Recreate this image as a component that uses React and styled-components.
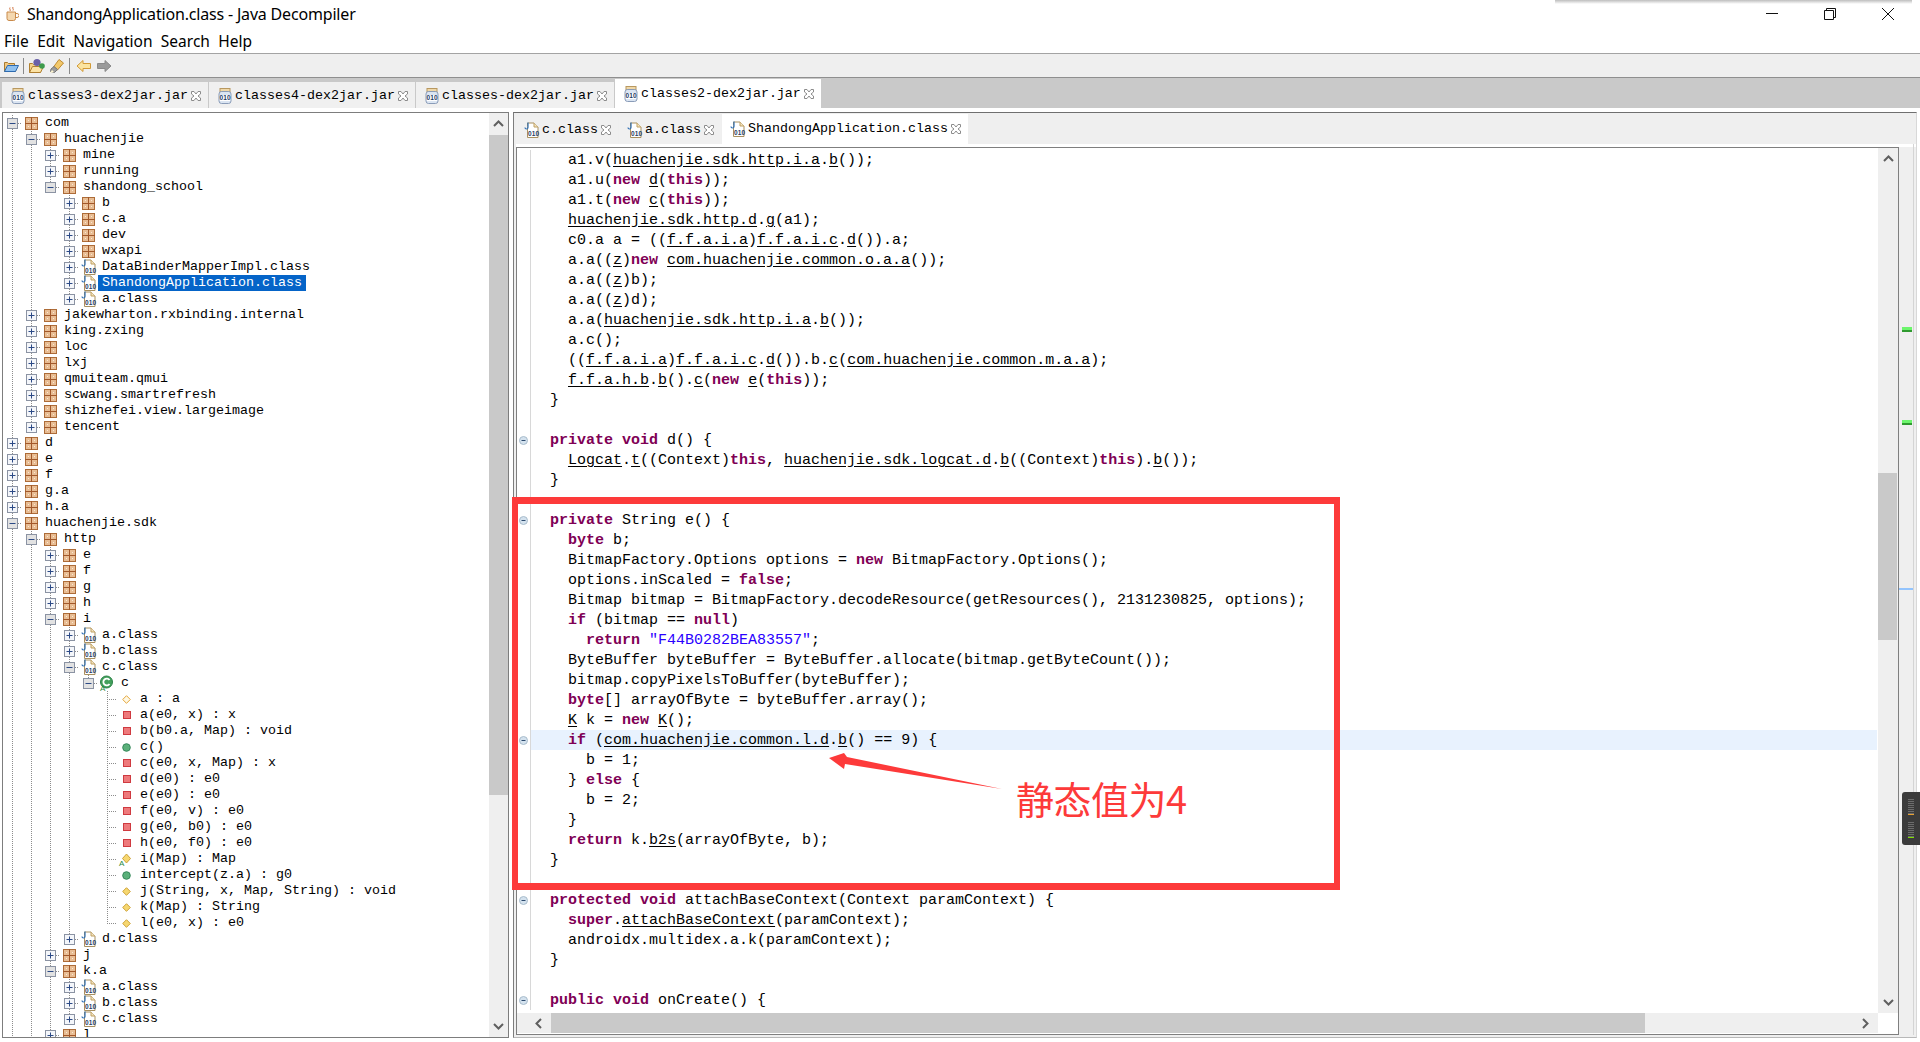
import React from 'react';
import styled, { createGlobalStyle } from 'styled-components';

const GlobalStyle = createGlobalStyle`
  html, body { margin: 0; padding: 0; background: #fff; }
  #root { width: 1920px; height: 1042px; overflow: hidden; }
`;

const MONO = `"Liberation Mono", monospace`;
const UI = `"Noto Sans", sans-serif`;

const Page = styled.div`
  position: relative;
  width: 1920px;
  height: 1042px;
  display: flex;
  flex-direction: column;
  background: #fff;
  overflow: hidden;
`;
const TopShadow = styled.div`
  position: absolute;
  top: 0;
  left: 1555px;
  width: 357px;
  height: 4px;
  background: linear-gradient(#bdbdbd, rgba(255, 255, 255, 0));
`;
const TitleBar = styled.div`
  height: 30px;
  flex: none;
  display: flex;
  align-items: center;
  padding: 0 26px 2px 5px;
  box-sizing: border-box;
  font: 16px ${UI};
  color: #000;
`;
const TitleText = styled.span`
  margin-left: 8px;
  letter-spacing: -0.18px;
`;
const WindowButtons = styled.div`
  margin-left: auto;
  display: flex;
  gap: 46px;
`;
const MenuBar = styled.div`
  height: 24px;
  flex: none;
  box-sizing: border-box;
  display: flex;
  align-items: center;
  gap: 8.4px;
  padding: 0 0 2px 4px;
  font: 15.5px ${UI};
  color: #000;
  border-bottom: 1px solid #a3a3a3;
`;
const ToolBar = styled.div`
  height: 24px;
  flex: none;
  box-sizing: border-box;
  display: flex;
  align-items: center;
  padding-left: 3px;
  gap: 4px;
  background: #efefef;
  border-bottom: 1px solid #8f8f8f;
`;
const ToolSep = styled.div`
  width: 1px;
  height: 16px;
  background: #8a8a8a;
  margin-right: ${p => p.$after}px;
`;
const JarTabs = styled.div`
  height: 30px;
  flex: none;
  display: flex;
  align-items: flex-end;
  gap: 1px;
  padding-left: 2px;
  background: #c9c9c9;
`;
const TabItem = styled.div`
  position: relative;
  box-sizing: border-box;
  height: ${p => p.$height}px;
  display: flex;
  align-items: center;
  padding: ${p => p.$padTop}px 6px ${p => p.$padBottom}px 8px;
  font: 13.33px/16px ${MONO};
  color: #000;
  background: ${p => (p.$active ? '#fff' : '#f0f0f0')};
  margin-bottom: ${p => p.$lift}px;
  svg:first-child { margin-right: 2px; }
  svg:last-child { margin-left: 3px; margin-right: 1px; }
`;
const Body = styled.div`
  margin-top: 4px;
  height: 926px;
  flex: none;
  display: flex;
  gap: 4px;
  padding-left: 2px;
`;
const TreePanel = styled.div`
  width: 507px;
  box-sizing: border-box;
  display: flex;
  border: 1px solid #7d7d7d;
`;
const TreeList = styled.div`
  flex: 1;
  padding-top: 2px;
  overflow: hidden;
  min-width: 0;
`;
const TreeRow = styled.div`
  height: 16px;
  display: flex;
  white-space: pre;
`;
const Guide = styled.div`
  width: 19px;
  flex: none;
  background: ${p =>
    p.$on
      ? 'repeating-linear-gradient(to bottom, #8c8c8c 0 1px, transparent 1px 2px) 9px 0 / 1px 100% no-repeat'
      : 'none'};
`;
const Connector = styled.div`
  width: 19px;
  flex: none;
  display: flex;
  align-items: center;
  padding-left: 4px;
  box-sizing: border-box;
  background:
    repeating-linear-gradient(to right, #8c8c8c 0 1px, transparent 1px 2px) 9px 8px / 10px 1px no-repeat,
    repeating-linear-gradient(to bottom, #8c8c8c 0 1px, transparent 1px 2px) 9px 0 / 1px ${p => (p.$last ? '8px' : '100%')} no-repeat;
`;
const IconCell = styled.div`
  width: 19px;
  flex: none;
  display: flex;
  align-items: center;
  justify-content: center;
`;
const TreeLabel = styled.span`
  padding: 0 4px;
  font: 13.33px/16px ${MONO};
  color: ${p => (p.$selected ? '#fff' : '#000')};
  background: ${p => (p.$selected ? '#0564c8' : 'transparent')};
`;
const ScrollV = styled.div`
  width: ${p => p.$width}px;
  flex: none;
  display: flex;
  flex-direction: column;
  background: #efefef;
`;
const ArrowCap = styled.div`
  height: ${p => p.$size}px;
  flex: none;
  display: flex;
  align-items: center;
  justify-content: center;
  margin-top: ${p => (p.$end ? 'auto' : '0')};
`;
const ThumbV = styled.div`
  width: 19px;
  height: ${p => p.$height}px;
  flex: none;
  margin-top: ${p => p.$top}px;
  background: #c9c9c9;
`;
const RightPanel = styled.div`
  width: 1404px;
  box-sizing: border-box;
  display: flex;
  flex-direction: column;
  border-top: 1px solid #6f6f6f;
  border-left: 1px solid #7d7d7d;
  border-right: 1px solid #d8d8d8;
  border-bottom: 1px solid #b8b8b8;
  background: #efefef;
  padding-left: 2px;
`;
const EditorTabs = styled.div`
  height: 34px;
  flex: none;
  display: flex;
  align-items: flex-end;
  gap: 1px;
  box-shadow: inset 0 -3px 0 #fff;
`;
const EditorRow = styled.div`
  height: 888px;
  flex: none;
  display: flex;
`;
const Editor = styled.div`
  position: relative;
  width: 1383px;
  box-sizing: border-box;
  display: grid;
  grid-template-columns: 1fr 20px;
  grid-template-rows: 865px 20px;
  border: 1px solid #7f7f7f;
  background: #fff;
`;
const CodeArea = styled.div`
  overflow: hidden;
  padding-top: 2px;
`;
const CodeLine = styled.div`
  height: 20px;
  display: flex;
  margin-right: 1px;
`;
const FoldCell = styled.div`
  width: 14px;
  flex: none;
  box-sizing: border-box;
  display: flex;
  align-items: center;
  justify-content: center;
  padding-right: 1px;
  background: #fff;
  border-right: 1px solid #d8d8d8;
`;
const CodeText = styled.div`
  flex: 1;
  height: 20px;
  padding-left: 19px;
  white-space: pre;
  font: 15px/22px ${MONO};
  color: #000;
  background: ${p => (p.$current ? '#e8f2fe' : 'transparent')};
`;
const Keyword = styled.span`
  color: #7f0055;
  font-weight: bold;
`;
const StringLit = styled.span`
  color: #2a00ff;
`;
const Ref = styled.span`
  text-decoration: underline;
  text-underline-offset: 2px;
`;
const ScrollH = styled.div`
  display: flex;
  align-items: center;
  background: #efefef;
`;
const ArrowCapH = styled.div`
  width: ${p => p.$size}px;
  height: 20px;
  flex: none;
  box-sizing: border-box;
  padding-right: ${p => p.$inset}px;
  display: flex;
  align-items: center;
  justify-content: flex-end;
`;
const ThumbH = styled.div`
  width: 1094px;
  height: 20px;
  flex: none;
  background: #c9c9c9;
`;
const Corner = styled.div`
  background: #fff;
`;
const RedBox = styled.div`
  position: absolute;
  left: -5px;
  top: 349px;
  width: 828px;
  height: 393px;
  box-sizing: border-box;
  border: 6px solid #fd3a3a;
  border-top-width: 7px;
  border-bottom-width: 7px;
  pointer-events: none;
`;
const ArrowMark = styled.svg`
  position: absolute;
  left: 312px;
  top: 605px;
`;
const Note = styled.div`
  position: absolute;
  left: 499px;
  top: 626px;
  font: 38px/48px "Noto Sans CJK SC", sans-serif;
  letter-spacing: -0.5px;
  color: #fd3a3a;
  white-space: nowrap;
`;
const Ruler = styled.div`
  position: relative;
  width: 14px;
  flex: none;
  margin-top: -3px;
  border-right: 1px solid #d4d4d4;
`;
const RulerMark = styled.div`
  position: absolute;
  left: 3px;
  width: 10px;
  height: 5px;
  top: ${p => p.$top}px;
  background: linear-gradient(#6cf56c 60%, #2f9a2f 60%);
`;
const RulerLine = styled.div`
  position: absolute;
  left: 0;
  width: 14px;
  height: 2px;
  top: ${p => p.$top}px;
  background: #93c4fd;
`;
const FloatWidget = styled.div`
  position: absolute;
  left: 1902px;
  top: 792px;
  width: 18px;
  height: 53px;
  box-sizing: border-box;
  padding: 7px 6px 0;
  display: flex;
  flex-direction: column;
  background: #3b3b3b;
  border-radius: 3px 0 0 3px;
`;
const MeterLines = styled.div`
  height: 15px;
  background: repeating-linear-gradient(#6c6c6c 0 1px, transparent 1px 2px);
`;
const MeterTick = styled.div`
  height: 1px;
  margin-bottom: 7px;
  background: ${p => p.$color};
`;

const CupIcon = () => (
  <svg width="14" height="16" viewBox="0 0 14 16">
    <path d="M2 6h8.5v6.5a2 2 0 0 1-2 2H4a2 2 0 0 1-2-2z" fill="#f4d8b0" stroke="#c98a4a" />
    <path d="M10.5 7.5h1.5a1.5 1.5 0 0 1 0 4h-1.5" fill="none" stroke="#c98a4a" />
    <path d="M5 1.5c-1 1.5 1 2 0 3.5M8 1c-1 1.5 1 2 0 3.5" fill="none" stroke="#d0703a" />
  </svg>
);
const MinIcon = () => (
  <svg width="12" height="12" viewBox="0 0 12 12"><path d="M0 5.5h12" stroke="#111" /></svg>
);
const RestoreIcon = () => (
  <svg width="12" height="12" viewBox="0 0 12 12">
    <path d="M.5 2.5h9v9h-9z M2.5 2.5v-2h9v9h-2" fill="none" stroke="#111" />
  </svg>
);
const CloseIcon = () => (
  <svg width="12" height="12" viewBox="0 0 12 12"><path d="M0 0l12 12M12 0L0 12" stroke="#111" /></svg>
);
const OpenFolderIcon = () => (
  <svg width="16" height="16" viewBox="0 0 16 16">
    <path d="M1.5 4.5v9h11l1-6h-2v-2h-6l-1-1z" fill="#f2c880" stroke="#a87a30" />
    <path d="M1.5 13.5l3-6h11l-3 6z" fill="#8fc0ee" stroke="#2c6ab0" />
  </svg>
);
const ClassFolderIcon = () => (
  <svg width="16" height="16" viewBox="0 0 16 16">
    <path d="M.5 5.5v9h11l1-6h-2v-2h-6l-1-1z" fill="#f5d28a" stroke="#b08030" />
    <path d="M.5 14.5l3-6h11l-3 6z" fill="#fbe2a4" stroke="#b08030" />
    <circle cx="8" cy="4.5" r="3.6" fill="#6a60a8" />
    <circle cx="13" cy="8" r="2.8" fill="#3d9a4c" />
  </svg>
);
const TorchIcon = () => (
  <svg width="16" height="16" viewBox="0 0 16 16">
    <path d="M10 1.500l4.500 3.500-6 7-4-3z" fill="#f2c86a" stroke="#c08a30" />
    <path d="M5 8.500l3.500 3-3 3-4-1 .5-2.500z" fill="#9c9c9c" stroke="#777" />
    <path d="M1 15l2-3 2 2z" fill="#fff6d0" />
  </svg>
);
const BackIcon = () => (
  <svg width="16" height="16" viewBox="0 0 16 16">
    <path d="M1 8l6-5.500V5.500h7.500v5H7v3z" fill="#fbe4a0" stroke="#d29a36" />
  </svg>
);
const ForwardIcon = () => (
  <svg width="16" height="16" viewBox="0 0 16 16">
    <path d="M15 8L9 2.500V5.500H1.500v5H9v3z" fill="#9a9a9a" stroke="#8a8a8a" />
  </svg>
);
const BitsText = ({ x, y }) => (
  <text x={x} y={y} fontSize="6.5" fontWeight="bold" fontFamily="Liberation Sans" fill="#1d3c66" textLength="11">010</text>
);
const JarIcon = () => (
  <svg width="16" height="16" viewBox="0 0 16 16">
    <rect x="3" y="0.5" width="10" height="3" fill="#f0d8a8" stroke="#b89860" />
    <rect x="2" y="3.5" width="12" height="12" rx="2.5" fill="#dbe5f2" stroke="#8a9cb8" />
    <rect x="2.8" y="7" width="10.4" height="6" fill="#fff" />
    <BitsText x="2.5" y="12.4" />
  </svg>
);
const FileIcon = () => (
  <svg width="16" height="16" viewBox="0 0 16 16">
    <path d="M3.500 4.500V1h6.500l4 4v10.500H3.500z" fill="#fff" stroke="#a89060" />
    <path d="M10 1v4h4" fill="#f4e4c0" stroke="#c0a060" />
    <path d="M4 .5v5a1.500 1.500 0 0 1-3 0" fill="none" stroke="#2f6fb4" strokeWidth="1.2" />
    <BitsText x="4" y="14" />
  </svg>
);
const PackageIcon = () => (
  <svg width="13" height="13" viewBox="0 0 13 13">
    <rect x="0.5" y="0.5" width="12" height="12" fill="#e8bd94" stroke="#ad6c38" />
    <path d="M6.500 0v13M0 6.500h13" stroke="#a2582a" />
    <path d="M3 3h1v1H3zM9 3h1v1H9zM3 9h1v1H3zM9 9h1v1H9z" fill="#fbe8d4" />
  </svg>
);
const Expander = ({ open }) => (
  <svg width="11" height="11" viewBox="0 0 11 11">
    <rect x="0.5" y="0.5" width="10" height="10" fill={open ? '#e2e2e2' : '#f4f6fa'} stroke="#8b93a3" />
    <path d={open ? 'M2.500 5.500h6' : 'M2.500 5.500h6M5.500 2.500v6'} stroke="#2c4a86" />
  </svg>
);
const ClassIcon = () => (
  <svg width="19" height="16" viewBox="0 0 19 16">
    <circle cx="8.500" cy="7" r="6" fill="#43a05c" stroke="#2a8046" />
    <path d="M11.500 5a3.400 3.400 0 1 0 0 4" fill="none" stroke="#fff" strokeWidth="1.8" />
    <text x="2" y="15.500" fontSize="8" fontFamily="Liberation Sans" fill="#1f8a3e">A</text>
  </svg>
);
const MemberIcon = ({ kind }) => {
  if (kind === 'private') {
    return (
      <svg width="8" height="8" viewBox="0 0 8 8">
        <rect x="0.5" y="0.5" width="7" height="7" fill="#ee7a7c" stroke="#cf3a40" />
      </svg>
    );
  }
  if (kind === 'public') {
    return (
      <svg width="9" height="9" viewBox="0 0 9 9">
        <circle cx="4.500" cy="4.500" r="3.800" fill="#5bb07a" stroke="#35875a" />
      </svg>
    );
  }
  if (kind === 'abstract') {
    return (
      <svg width="17" height="14" viewBox="0 0 17 14">
        <path d="M8.500 2l4 4.500-4 4.500-4-4.500z" fill="#f6d770" stroke="#cda238" />
        <text x="1" y="13.500" fontSize="8" fontFamily="Liberation Sans" fill="#1f8a3e">A</text>
      </svg>
    );
  }
  return (
    <svg width="9" height="9" viewBox="0 0 9 9">
      <path d="M4.500.7l3.800 3.800-3.800 3.800L.7 4.500z" fill={kind === 'field' ? '#fff8e4' : '#f6d770'} stroke={kind === 'field' ? '#e3a63c' : '#cda238'} />
    </svg>
  );
};
const TabClose = () => (
  <svg width="10" height="10" viewBox="0 0 10 10">
    <path d="M.5.5h2.500L5 3l2-2.500h2.500V3L7 5l2.500 2v2.500H7L5 7 3 9.500H.5V7L3 5 .5 3z" fill="#fff" stroke="#8c8c8c" />
  </svg>
);
const Chevron = ({ dir }) => {
  const d = { up: 'M2 8l4.500-4.500L11 8', down: 'M2 4l4.500 4.500L11 4', left: 'M8 2L3.500 6.500 8 11', right: 'M4 2l4.500 4.500L4 11' }[dir];
  return (
    <svg width="13" height="13" viewBox="0 0 13 13">
      <path d={d} fill="none" stroke="#5f5f5f" strokeWidth="2" />
    </svg>
  );
};

const pkg = (name, kids) => ({ name, icon: 'pkg', kids });
const cls = (name, extra) => ({ name, icon: 'file', ...extra });
const member = (name, kind) => ({ name, icon: kind, leaf: true });

const TREE = [
  pkg('com', [
    pkg('huachenjie', [
      pkg('mine'),
      pkg('running'),
      pkg('shandong_school', [
        pkg('b'),
        pkg('c.a'),
        pkg('dev'),
        pkg('wxapi'),
        cls('DataBinderMapperImpl.class'),
        cls('ShandongApplication.class', { selected: true }),
        cls('a.class'),
      ]),
    ]),
    pkg('jakewharton.rxbinding.internal'),
    pkg('king.zxing'),
    pkg('loc'),
    pkg('lxj'),
    pkg('qmuiteam.qmui'),
    pkg('scwang.smartrefresh'),
    pkg('shizhefei.view.largeimage'),
    pkg('tencent'),
  ]),
  pkg('d'),
  pkg('e'),
  pkg('f'),
  pkg('g.a'),
  pkg('h.a'),
  {
    ...pkg('huachenjie.sdk', [
      {
        ...pkg('http', [
          pkg('e'),
          pkg('f'),
          pkg('g'),
          pkg('h'),
          pkg('i', [
            cls('a.class'),
            cls('b.class'),
            cls('c.class', {
              kids: [
                {
                  name: 'c',
                  icon: 'class',
                  kids: [
                    member('a : a', 'field'),
                    member('a(e0, x) : x', 'private'),
                    member('b(b0.a, Map) : void', 'private'),
                    member('c()', 'public'),
                    member('c(e0, x, Map) : x', 'private'),
                    member('d(e0) : e0', 'private'),
                    member('e(e0) : e0', 'private'),
                    member('f(e0, v) : e0', 'private'),
                    member('g(e0, b0) : e0', 'private'),
                    member('h(e0, f0) : e0', 'private'),
                    member('i(Map) : Map', 'abstract'),
                    member('intercept(z.a) : g0', 'public'),
                    member('j(String, x, Map, String) : void', 'package'),
                    member('k(Map) : String', 'package'),
                    member('l(e0, x) : e0', 'package'),
                  ],
                },
              ],
            }),
            cls('d.class'),
          ]),
          pkg('j'),
          pkg('k.a', [cls('a.class'), cls('b.class'), cls('c.class')]),
          pkg('l'),
        ]),
        more: true,
      },
    ]),
    more: true,
  },
];

const flatten = (nodes, guides = []) =>
  nodes.flatMap((node, i) => {
    const last = i === nodes.length - 1 && !node.more;
    const row = { ...node, guides, last };
    return [row, ...(node.kids ? flatten(node.kids, [...guides, !last]) : [])];
  });

const ROWS = flatten(TREE);

const RowIcon = ({ icon }) => {
  if (icon === 'pkg') return <PackageIcon />;
  if (icon === 'file') return <FileIcon />;
  if (icon === 'class') return <ClassIcon />;
  return <MemberIcon kind={icon} />;
};

const CODE = [
  '  a1.v(_huachenjie.sdk.http.i.a_._b_());',
  '  a1.u(*new* _d_(*this*));',
  '  a1.t(*new* _c_(*this*));',
  '  _huachenjie.sdk.http.d_._g_(a1);',
  '  c0.a a = ((_f.f.a.i.a_)_f.f.a.i.c_._d_()).a;',
  '  a.a((_z_)*new* _com.huachenjie.common.o.a.a_());',
  '  a.a((_z_)b);',
  '  a.a((_z_)d);',
  '  a.a(_huachenjie.sdk.http.i.a_._b_());',
  '  a.c();',
  '  ((_f.f.a.i.a_)_f.f.a.i.c_._d_()).b._c_(_com.huachenjie.common.m.a.a_);',
  '  _f.f.a.h.b_._b_()._c_(*new* _e_(*this*));',
  '}',
  '',
  '*private* *void* d() {',
  '  _Logcat_._t_((Context)*this*, _huachenjie.sdk.logcat.d_._b_((Context)*this*)._b_());',
  '}',
  '',
  '*private* String e() {',
  '  *byte* b;',
  '  BitmapFactory.Options options = *new* BitmapFactory.Options();',
  '  options.inScaled = *false*;',
  '  Bitmap bitmap = BitmapFactory.decodeResource(getResources(), 2131230825, options);',
  '  *if* (bitmap == *null*)',
  '    *return* "F44B0282BEA83557";',
  '  ByteBuffer byteBuffer = ByteBuffer.allocate(bitmap.getByteCount());',
  '  bitmap.copyPixelsToBuffer(byteBuffer);',
  '  *byte*[] arrayOfByte = byteBuffer.array();',
  '  _K_ k = *new* _K_();',
  '  *if* (_com.huachenjie.common.l.d_._b_() == 9) {',
  '    b = 1;',
  '  } *else* {',
  '    b = 2;',
  '  }',
  '  *return* k._b2s_(arrayOfByte, b);',
  '}',
  '',
  '*protected* *void* attachBaseContext(Context paramContext) {',
  '  *super*._attachBaseContext_(paramContext);',
  '  androidx.multidex.a.k(paramContext);',
  '}',
  '',
  '*public* *void* onCreate() {',
];
const FOLDS = [14, 18, 29, 37, 42];

const renderCode = line =>
  line.split(/(\*[^*]+\*|_[^_]+_|"[^"]*")/).map((part, i) => {
    if (part[0] === '*') return <Keyword key={i}>{part.slice(1, -1)}</Keyword>;
    if (part[0] === '_') return <Ref key={i}>{part.slice(1, -1)}</Ref>;
    if (part[0] === '"') return <StringLit key={i}>{part}</StringLit>;
    return part;
  });

const FoldIcon = () => (
  <svg width="9" height="9" viewBox="0 0 9 9">
    <circle cx="4.500" cy="4.500" r="4" fill="#d4e2ee" stroke="#a8bccc" />
    <path d="M2.500 4.500h4" stroke="#2c4a6e" />
  </svg>
);

const Tab = ({ icon, label, active, height, lift, padTop = 0, padBottom = 0 }) => (
  <TabItem $active={active} $height={height} $lift={lift} $padTop={padTop} $padBottom={padBottom}>
    {icon}
    {label}
    <TabClose />
  </TabItem>
);

export default function App() {
  return (
    <Page>
      <GlobalStyle />
      <TitleBar>
        <CupIcon />
        <TitleText>ShandongApplication.class - Java Decompiler</TitleText>
        <WindowButtons>
          <MinIcon />
          <RestoreIcon />
          <CloseIcon />
        </WindowButtons>
      </TitleBar>
      <MenuBar>
        <span>File</span>
        <span>Edit</span>
        <span>Navigation</span>
        <span>Search</span>
        <span>Help</span>
      </MenuBar>
      <ToolBar>
        <OpenFolderIcon />
        <ToolSep $after={1} />
        <ClassFolderIcon />
        <TorchIcon />
        <ToolSep $after={2} />
        <BackIcon />
        <ForwardIcon />
      </ToolBar>
      <JarTabs>
        <Tab icon={<JarIcon />} label="classes3-dex2jar.jar" height={26} lift={0} padTop={1} />
        <Tab icon={<JarIcon />} label="classes4-dex2jar.jar" height={26} lift={0} padTop={1} />
        <Tab icon={<JarIcon />} label="classes-dex2jar.jar" height={26} lift={0} padTop={1} />
        <Tab icon={<JarIcon />} label="classes2-dex2jar.jar" height={30} lift={-1} active />
      </JarTabs>
      <Body>
        <TreePanel>
          <TreeList>
            {ROWS.map((row, i) => (
              <TreeRow key={i}>
                {row.guides.map((on, g) => (
                  <Guide key={g} $on={on} />
                ))}
                <Connector $last={row.last}>
                  {!row.leaf && <Expander open={!!row.kids} />}
                </Connector>
                <IconCell>
                  <RowIcon icon={row.icon} />
                </IconCell>
                <TreeLabel $selected={row.selected}>{row.name}</TreeLabel>
              </TreeRow>
            ))}
          </TreeList>
          <ScrollV $width={19}>
            <ArrowCap $size={22}>
              <Chevron dir="up" />
            </ArrowCap>
            <ThumbV $top={0} $height={660} />
            <ArrowCap $size={22} $end>
              <Chevron dir="down" />
            </ArrowCap>
          </ScrollV>
        </TreePanel>
        <RightPanel>
          <EditorTabs>
            <Tab icon={<FileIcon />} label="c.class" height={27} lift={3} padBottom={2} />
            <Tab icon={<FileIcon />} label="a.class" height={27} lift={3} padBottom={2} />
            <Tab icon={<FileIcon />} label="ShandongApplication.class" height={33} lift={0} padBottom={3} active />
          </EditorTabs>
          <EditorRow>
            <Editor>
              <CodeArea>
                {CODE.map((line, i) => (
                  <CodeLine key={i}>
                    <FoldCell>{FOLDS.includes(i) && <FoldIcon />}</FoldCell>
                    <CodeText $current={i === 29}>{renderCode(line)}</CodeText>
                  </CodeLine>
                ))}
              </CodeArea>
              <ScrollV $width={20}>
                <ArrowCap $size={22}>
                  <Chevron dir="up" />
                </ArrowCap>
                <ThumbV $top={303} $height={167} />
                <ArrowCap $size={22} $end>
                  <Chevron dir="down" />
                </ArrowCap>
              </ScrollV>
              <ScrollH>
                <ArrowCapH $size={34} $inset={5}>
                  <Chevron dir="left" />
                </ArrowCapH>
                <ThumbH />
                <ArrowCapH $size={232} $inset={5}>
                  <Chevron dir="right" />
                </ArrowCapH>
              </ScrollH>
              <Corner />
              <RedBox />
              <ArrowMark width="175" height="40" viewBox="829 753 175 40">
                <path d="M829 758l15-5 3 4 155 32-157-25-1 5z" fill="#fd3a3a" />
              </ArrowMark>
              <Note>静态值为4</Note>
            </Editor>
            <Ruler>
              <RulerMark $top={183} />
              <RulerMark $top={276} />
              <RulerLine $top={444} />
            </Ruler>
          </EditorRow>
        </RightPanel>
      </Body>
      <TopShadow />
      <FloatWidget>
        <MeterLines />
        <MeterTick $color="#e8a030" />
        <MeterLines />
        <MeterTick $color="#7ee000" />
      </FloatWidget>
    </Page>
  );
}
